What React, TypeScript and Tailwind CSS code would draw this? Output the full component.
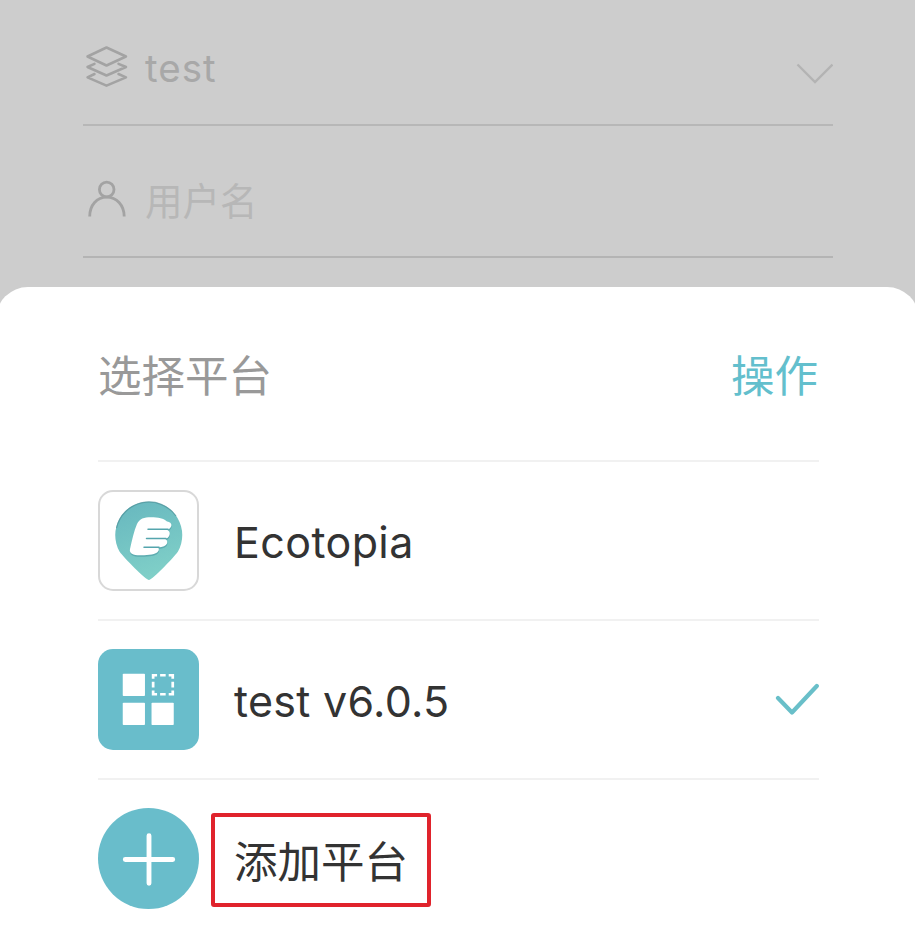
import type { ReactNode } from 'react';

const cjk = "font-['Noto_Sans_CJK_SC',sans-serif]";
const latin = "font-['Inter','Noto_Sans_CJK_SC',sans-serif]";

function LayersIcon() {
  return (
    <svg className="w-[44px] h-[44px] shrink-0" viewBox="0 0 44 44" fill="none" stroke="#a3a3a3" strokeWidth="2.5" strokeLinejoin="round" strokeLinecap="round">
      <path d="M22.5 2.5 42 11.5 22.5 20.5 3.5 11.5Z" />
      <path d="M10.5 18.8 3.5 22 22.5 30.5 42 22 34.5 18.8" />
      <path d="M10.5 29 3.5 32.3 22.5 40.7 42 32.3 34.5 29" />
    </svg>
  );
}

function UserIcon() {
  return (
    <svg className="w-[44px] h-[44px] shrink-0" viewBox="0 0 44 44" fill="none" stroke="#a3a3a3" strokeWidth="2.8">
      <circle cx="21.7" cy="12.5" r="7.3" />
      <path d="M4.7 39.5C4.7 28 12 20.1 21.7 20.1S39.2 28 39.2 39.5" />
    </svg>
  );
}

const hand =
  'M32 59C34 50 36 41 39 34 41.5 28.500 46 27.300 53 27.200 60 27.200 66 28.500 69 31.500 72.500 32 73.800 34 73.300 36 72.800 38 71 39.200 69 39.800 71.500 41 72.200 43 71.500 45 70.800 47.500 69 48.500 67 48.800 69 50 69.600 51.500 69 53.500 68 56 65 57 60 57.500 61 58.500 61.300 60 60 61.500 58 64.500 49 65.500 42 65.300 35 65.200 31 63.500 32 59Z';

function PinLogo() {
  return (
    <svg className="w-full h-full" viewBox="2 2 97 97">
      <defs>
        <linearGradient id="pin" x1="0.2" y1="0" x2="0.5" y2="1">
          <stop offset="0" stopColor="#68b8bf" />
          <stop offset="1" stopColor="#80d0c8" />
        </linearGradient>
      </defs>
      <path d="M51 90C48 90 26 68 21.5 61.5A33.5 33.5 0 1 1 80 61.5C75.5 68 54 90 51 90Z" fill="url(#pin)" />
      <path d="M18.500 38A33.2 33.2 0 0 1 78 26" fill="none" stroke="#4d9299" strokeWidth="1.2" opacity="0.7" />
      <path d={hand} transform="translate(0.2 1.5)" fill="#4f9da5" opacity="0.65" />
      <path d={hand} fill="#fff" />
      <path d="M50 39.2H70M48.5 48.5H68M46 57.2H61" stroke="#55a5ad" strokeWidth="1.5" strokeLinecap="round" />
    </svg>
  );
}

function BlocksLogo() {
  return (
    <svg className="w-full h-full" viewBox="0 0 100 100" fill="#fff">
      <rect x="24.5" y="24.5" width="22" height="22" rx="0.8" />
      <rect x="24.5" y="53.2" width="22" height="22" rx="0.8" />
      <rect x="53" y="53.2" width="22" height="22" rx="0.8" />
      <path
        d="M54.6 29.5V26H58.5M61.5 26H67M70 26H74V29.5M74 32.5V38M74 41V44.8H70M67 44.8H61.5M58.5 44.8H54.6V41M54.6 38V32.5"
        fill="none"
        stroke="#fff"
        strokeWidth="2.7"
      />
    </svg>
  );
}

function PlusLogo() {
  return (
    <svg className="w-full h-full" viewBox="0 0 100 100" stroke="#fff" strokeWidth="4.8" strokeLinecap="round">
      <path d="M27 51H74M50.5 27.5V74.5" />
    </svg>
  );
}

function PlatformRow({ icon, iconClass, children }: { icon: ReactNode; iconClass: string; children: ReactNode }) {
  return (
    <li className="flex items-center h-[159px] border-t-2 border-[#f1f1f1]">
      <div className={`w-[101px] h-[101px] shrink-0 overflow-hidden ${iconClass}`}>{icon}</div>
      {children}
    </li>
  );
}

export default function App() {
  return (
    <div className="w-full h-[930px] overflow-hidden flex flex-col bg-[#cdcdcd]">
      <div className="h-[287px] shrink-0 pl-[83px] pr-[82px]">
        <div className="h-[126px] flex items-center border-b-2 border-[#b7b7b7] pt-[10px]">
          <div className="pl-[1px]"><LayersIcon /></div>
          <span className={`${latin} pl-[17px] pt-[2px] text-[38.5px] leading-none tracking-[1px] text-[#a8a8a8]`}>test</span>
          <svg className="w-[40px] h-[24px] ml-auto mt-[14px]" viewBox="0 0 40 24" fill="none" stroke="#b3b3b3" strokeWidth="2.3">
            <path d="M4.5 2.5 22 20 39.5 2.5" />
          </svg>
        </div>
        <div className="h-[132px] flex items-center border-b-2 border-[#b4b4b4] pt-[16px]">
          <div className="pl-[2px]"><UserIcon /></div>
          <span className={`${cjk} pl-[16px] text-[37.5px] leading-none text-[#b7b7b7]`}>用户名</span>
        </div>
      </div>

      <div className="-mx-[4px] flex-1 rounded-t-[32px] bg-white pl-[102px] pr-[100px]">
        <div className={`${cjk} h-[173px] flex items-center justify-between text-[43.5px] leading-none`}>
          <h2 className="text-[#999999]">选择平台</h2>
          <button className="pr-[1px] text-[#63bfcd]">操作</button>
        </div>
        <ul>
          <PlatformRow icon={<PinLogo />} iconClass="rounded-[15px] border-2 border-[#d8d8d8] bg-white">
            <span className={`${latin} pl-[35px] pt-[4px] text-[43px] leading-none tracking-[0.4px] text-[#333333]`}>Ecotopia</span>
          </PlatformRow>
          <PlatformRow icon={<BlocksLogo />} iconClass="rounded-[15px] bg-[#69bdcb]">
            <span className={`${latin} pl-[35px] pt-[4px] text-[43px] leading-none tracking-[0.3px] text-[#333333]`}>test v6.0.5</span>
            <svg className="w-[46px] h-[34px] ml-auto" viewBox="0 0 46 34" fill="none" stroke="#69bfc9" strokeWidth="4.2" strokeLinecap="round" strokeLinejoin="round">
              <path d="M5 15 19 29.5 43.8 3" />
            </svg>
          </PlatformRow>
          <PlatformRow icon={<PlusLogo />} iconClass="rounded-full bg-[#69bdcb]">
            <div className={`${cjk} ml-[12px] mt-[3px] w-[220px] h-[94px] flex items-center justify-center border-4 border-[#e0232c] rounded-[3px] text-[43.5px] leading-none text-[#333333]`}>
              添加平台
            </div>
          </PlatformRow>
        </ul>
      </div>
    </div>
  );
}
